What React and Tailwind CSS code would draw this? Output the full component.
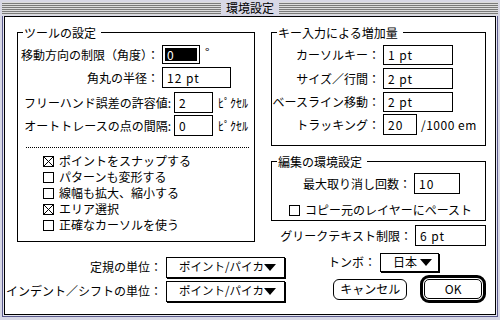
import React from "react";

const F = "font-['Noto_Sans_CJK_JP',sans-serif]";

function Field({ className, children }) {
  return (
    <div className={`border border-black bg-white flex items-center pl-[4px] text-[12px] leading-none tracking-[1px] ${className}`}>
      {children}
    </div>
  );
}

function Check({ checked }) {
  return (
    <svg width="11" height="11" viewBox="0 0 11 11" className="shrink-0">
      <rect x="0.5" y="0.5" width="10" height="10" fill="white" stroke="black" />
      {checked && (
        <g stroke="black" strokeWidth="1" shapeRendering="crispEdges">
          <line x1="1" y1="1" x2="10" y2="10" />
          <line x1="10" y1="1" x2="1" y2="10" />
        </g>
      )}
    </svg>
  );
}

function CheckRow({ checked, children, className }) {
  return (
    <div className={`h-[16px] flex items-center gap-[5px] text-[12px] leading-none whitespace-nowrap ${className}`}>
      <Check checked={checked} />
      <span>{children}</span>
    </div>
  );
}

function Tri() {
  return (
    <svg width="12" height="7" viewBox="0 0 12 7" className="shrink-0">
      <polygon points="0,0 12,0 6,7" fill="black" />
    </svg>
  );
}

function Popup({ className, children }) {
  return (
    <div className={`border border-black bg-white shadow-[1px_1px_0_#000] flex items-center text-[12px] leading-none whitespace-nowrap ${className}`}>
      {children}
    </div>
  );
}

function Label({ className, children }) {
  return (
    <div className={`flex justify-end items-center whitespace-nowrap text-[12px] leading-none shrink-0 ${className}`}>
      {children}
    </div>
  );
}

function Legend({ children }) {
  return (
    <div className="-mt-[7px] ml-[5px] w-fit bg-white pl-[1px] pr-[5px] h-[13px] text-[12px] leading-[13px] whitespace-nowrap">
      {children}
    </div>
  );
}

function UnitPopup() {
  return (
    <Popup className="w-[122px] h-[21px] pl-[12px] pr-[8px] justify-between">
      <span className="text-[11.5px]">ポイント/パイカ</span>
      <Tri />
    </Popup>
  );
}

export default function App() {
  return (
    <div className={`w-[500px] h-[320px] bg-[#d8d8e6] flex flex-col text-black ${F}`}>
      {/* title bar */}
      <div className="h-[16px] flex items-center px-[2px] shrink-0">
        <div className="flex-1 h-[13px] bg-[repeating-linear-gradient(to_bottom,#dcdcdc_0px,#dcdcdc_1px,#7a7a7a_1px,#7a7a7a_2px)]" />
        <div className="px-[5px] text-[12px] leading-none h-[16px] flex items-center">環境設定</div>
        <div className="flex-1 h-[13px] bg-[repeating-linear-gradient(to_bottom,#dcdcdc_0px,#dcdcdc_1px,#7a7a7a_1px,#7a7a7a_2px)]" />
      </div>
      {/* frame */}
      <div className="flex-1 mx-[2px] mb-[3px] border-x border-b border-[#5a5a8c] p-[1px] pt-0 bg-[#e6e6f0] flex">
        <div className="flex-1 bg-white border border-black flex pl-[12px] pt-[15px]">
          {/* left column */}
          <div className="w-[238px] flex flex-col shrink-0">
            <div className="h-[210px] border border-black flex flex-col">
              <Legend>ツールの設定</Legend>
              <div className="mt-[6px] flex items-center h-[19px]">
                <Label className="w-[144px] pr-[3px]">移動方向の制限（角度）：</Label>
                <div className="w-[38px] h-[19px] border border-black p-[2px]">
                  <div className="w-[32px] h-[13px] bg-black text-white text-[12px] leading-[13px] pl-[2px]">0</div>
                </div>
                <span className="ml-[5px] text-[12px] leading-none -mt-[6px]">°</span>
              </div>
              <div className="mt-[3px] flex items-center h-[21px]">
                <Label className="w-[144px] pr-[3px]">角丸の半径：</Label>
                <Field className="w-[69px] h-[21px]">12 pt</Field>
              </div>
              <div className="mt-[4px] flex items-center h-[21px]">
                <Label className="w-[156px] pr-[3px]">フリーハンド誤差の許容値:</Label>
                <Field className="w-[39px] h-[21px]">2</Field>
                <span className="ml-[5px] text-[12px] leading-none">ﾋﾟｸｾﾙ</span>
              </div>
              <div className="mt-[2px] flex items-center h-[21px]">
                <Label className="w-[156px] pr-[3px]">オートトレースの点の間隔:</Label>
                <Field className="w-[39px] h-[21px]">0</Field>
                <span className="ml-[5px] text-[12px] leading-none">ﾋﾟｸｾﾙ</span>
              </div>
              <div className="mt-[11px] ml-[8px] mr-[5px] border-t border-dotted border-black" />
              <div className="mt-[5px] ml-[25px] flex flex-col">
                <CheckRow checked>ポイントをスナップする</CheckRow>
                <CheckRow>パターンも変形する</CheckRow>
                <CheckRow>線幅も拡大、縮小する</CheckRow>
                <CheckRow checked>エリア選択</CheckRow>
                <CheckRow>正確なカーソルを使う</CheckRow>
              </div>
            </div>
            <div className="mt-[14px] flex items-center h-[22px]">
              <Label className="w-[149px] pr-[4px]">定規の単位：</Label>
              <UnitPopup />
            </div>
            <div className="mt-[2px] flex items-center h-[22px]">
              <Label className="w-[149px] pr-[4px]">インデント／シフトの単位：</Label>
              <UnitPopup />
            </div>
          </div>
          {/* right column */}
          <div className="ml-[16px] w-[215px] flex flex-col shrink-0">
            <div className="h-[114px] border border-black flex flex-col">
              <Legend>キー入力による増加量</Legend>
              <div className="mt-[6px] flex items-center h-[20px]">
                <Label className="w-[111px] pr-[3px]">カーソルキー：</Label>
                <Field className="w-[70px] h-[20px]">1 pt</Field>
              </div>
              <div className="mt-[3px] flex items-center h-[21px]">
                <Label className="w-[111px] pr-[3px]">サイズ／行間：</Label>
                <Field className="w-[70px] h-[21px]">2 pt</Field>
              </div>
              <div className="mt-[3px] flex items-center h-[20px]">
                <Label className="w-[111px] pr-[3px]">ベースライン移動：</Label>
                <Field className="w-[70px] h-[20px]">2 pt</Field>
              </div>
              <div className="mt-[2px] flex items-center h-[21px]">
                <Label className="w-[111px] pr-[3px]">トラッキング：</Label>
                <Field className="w-[34px] h-[21px]">20</Field>
                <span className="ml-[4px] text-[12px] leading-none whitespace-nowrap tracking-[0.5px]">/1000 em</span>
              </div>
            </div>
            <div className="mt-[15px] h-[60px] border border-black flex flex-col">
              <Legend>編集の環境設定</Legend>
              <div className="mt-[5px] flex items-center h-[21px]">
                <Label className="w-[142px] pr-[3px]">最大取り消し回数：</Label>
                <Field className="w-[46px] h-[21px]">10</Field>
              </div>
              <CheckRow className="mt-[8px] ml-[17px]">コピー元のレイヤーにペースト</CheckRow>
            </div>
            <div className="mt-[4px] flex items-center h-[21px]">
              <Label className="w-[144px] pr-[3px]">グリークテキスト制限：</Label>
              <Field className="w-[72px] h-[21px]">6 pt</Field>
            </div>
            <div className="mt-[6px] flex items-center h-[20px]">
              <Label className="w-[109px] pr-[4px]">トンボ：</Label>
              <Popup className="w-[59px] h-[19px] pl-[12px]">
                <span className="mr-[3px]">日本</span>
                <Tri />
              </Popup>
            </div>
            <div className="mt-[3px] flex items-center h-[28px]">
              <div className="ml-[62px] w-[76px] h-[21px] border border-black rounded-[6px] flex items-center justify-center text-[12px] leading-none">
                キャンセル
              </div>
              <div className="ml-[13px] w-[67px] h-[28px] border-[3px] border-black rounded-[9px] p-[1px]">
                <div className="w-full h-full border border-black rounded-[5px] flex items-center justify-center text-[12px] leading-none">
                  OK
                </div>
              </div>
            </div>
          </div>
        </div>
      </div>
    </div>
  );
}
